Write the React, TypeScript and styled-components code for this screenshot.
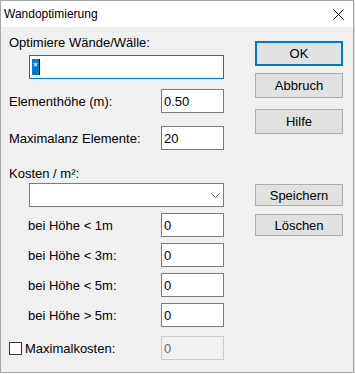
import React from "react";
import styled, { createGlobalStyle } from "styled-components";

const GlobalStyle = createGlobalStyle`
  body {
    margin: 0;
    background-color: #ffffff;
  }
`;

const Window = styled.div`
  width: 354px;
  height: 373px;
  box-sizing: border-box;
  border: 1px solid #a6a6a6;
  background-color: #f0f0f0;
  display: flex;
  flex-direction: column;
  font-family: "Liberation Sans", Arial, sans-serif;
  color: #000;
  box-shadow: 1px 1px 0 #d8d8d8;
`;

const TitleBar = styled.div`
  height: 26px;
  flex-shrink: 0;
  background-color: #ffffff;
  display: flex;
  align-items: center;
  justify-content: space-between;
  padding: 0 9px 0 3px;
  font-size: 12px;
`;

const Body = styled.div`
  flex: 1;
  display: flex;
  padding-left: 8px;
`;

const LeftCol = styled.div`
  width: 215px;
  display: flex;
  flex-direction: column;
`;

const RightCol = styled.div`
  width: 88px;
  margin-left: 31px;
  display: flex;
  flex-direction: column;
`;

const Label = styled.div<{ $mt?: number; $indent?: number }>`
  font-size: 13px;
  line-height: 15px;
  margin-top: ${(p) => p.$mt ?? 0}px;
  padding-left: ${(p) => p.$indent ?? 0}px;
  white-space: nowrap;
`;

const Row = styled.div<{ $mt: number }>`
  display: flex;
  align-items: center;
  justify-content: space-between;
  margin-top: ${(p) => p.$mt}px;
`;

const TextBox = styled.div<{ $disabled?: boolean }>`
  width: 63px;
  height: 24px;
  box-sizing: border-box;
  border: 1px solid ${(p) => (p.$disabled ? "#cccccc" : "#7a7a7a")};
  background-color: ${(p) => (p.$disabled ? "#f0f0f0" : "#ffffff")};
  color: ${(p) => (p.$disabled ? "#6d6d6d" : "#000")};
  font-size: 13px;
  display: flex;
  align-items: center;
  padding-left: 2px;
`;

const WideBox = styled.div<{ $mt: number; $focused?: boolean }>`
  margin-top: ${(p) => p.$mt}px;
  margin-left: 20px;
  width: 195px;
  height: 24px;
  box-sizing: border-box;
  border: 1px solid ${(p) => (p.$focused ? "#0078d7" : "#7a7a7a")};
  background-color: #ffffff;
  display: flex;
  align-items: center;
  font-size: 13px;
`;

const ComboBox = styled(WideBox)`
  justify-content: flex-end;
  padding-right: 3px;
`;

const Selection = styled.span`
  margin-left: 2px;
  background-color: #0078d7;
  color: #ffffff;
  font-size: 12px;
  line-height: 16px;
  height: 16px;
  padding: 0 1px;
`;

const Caret = styled.span`
  width: 1px;
  height: 16px;
  background-color: #000;
`;

const Button = styled.div<{ $mt: number; $h: number; $default?: boolean }>`
  margin-top: ${(p) => p.$mt}px;
  height: ${(p) => p.$h}px;
  box-sizing: border-box;
  border: ${(p) => (p.$default ? "2px solid #0078d7" : "1px solid #adadad")};
  background-color: #e1e1e1;
  font-size: 13px;
  display: flex;
  align-items: center;
  justify-content: center;
`;

const CheckRow = styled.div<{ $mt: number }>`
  display: flex;
  align-items: center;
  margin-top: ${(p) => p.$mt}px;
`;

const CheckBox = styled.div`
  width: 13px;
  height: 13px;
  box-sizing: border-box;
  border: 1px solid #333333;
  background-color: #ffffff;
  margin-right: 3px;
`;

const CheckLabel = styled.span`
  font-size: 13px;
  flex: 1;
`;

const costRows = [
  { label: "bei Höhe < 1m", mt: 6 },
  { label: "bei Höhe < 3m:", mt: 6 },
  { label: "bei Höhe < 5m:", mt: 6 },
  { label: "bei Höhe > 5m:", mt: 6 },
];

export default function App() {
  return (
    <>
      <GlobalStyle />
      <Window>
        <TitleBar>
          <span>Wandoptimierung</span>
          <svg width="11" height="11" viewBox="0 0 11 11">
            <path d="M0.5 0.5 L10.5 10.5 M10.5 0.5 L0.5 10.5" stroke="#000" strokeWidth="1" />
          </svg>
        </TitleBar>
        <Body>
          <LeftCol>
            <Label $mt={8}>Optimiere Wände/Wälle:</Label>
            <WideBox $mt={5} $focused>
              <Selection>*</Selection>
              <Caret />
            </WideBox>
            <Row $mt={10}>
              <Label>Elementhöhe (m):</Label>
              <TextBox>0.50</TextBox>
            </Row>
            <Row $mt={13}>
              <Label>Maximalanz Elemente:</Label>
              <TextBox>20</TextBox>
            </Row>
            <Label $mt={16}>Kosten / m²:</Label>
            <ComboBox $mt={2}>
              <svg width="9" height="5" viewBox="0 0 9 5">
                <polyline points="0.5,0.5 4.5,4.5 8.5,0.5" fill="none" stroke="#606060" strokeWidth="1" />
              </svg>
            </ComboBox>
            {costRows.map((r) => (
              <Row key={r.label} $mt={r.mt}>
                <Label $indent={19}>{r.label}</Label>
                <TextBox>0</TextBox>
              </Row>
            ))}
            <CheckRow $mt={9}>
              <CheckBox />
              <CheckLabel>Maximalkosten:</CheckLabel>
              <TextBox $disabled>0</TextBox>
            </CheckRow>
          </LeftCol>
          <RightCol>
            <Button $mt={14} $h={25} $default>
              OK
            </Button>
            <Button $mt={7} $h={25}>
              Abbruch
            </Button>
            <Button $mt={11} $h={25}>
              Hilfe
            </Button>
            <Button $mt={50} $h={22}>
              Speichern
            </Button>
            <Button $mt={8} $h={22}>
              Löschen
            </Button>
          </RightCol>
        </Body>
      </Window>
    </>
  );
}
